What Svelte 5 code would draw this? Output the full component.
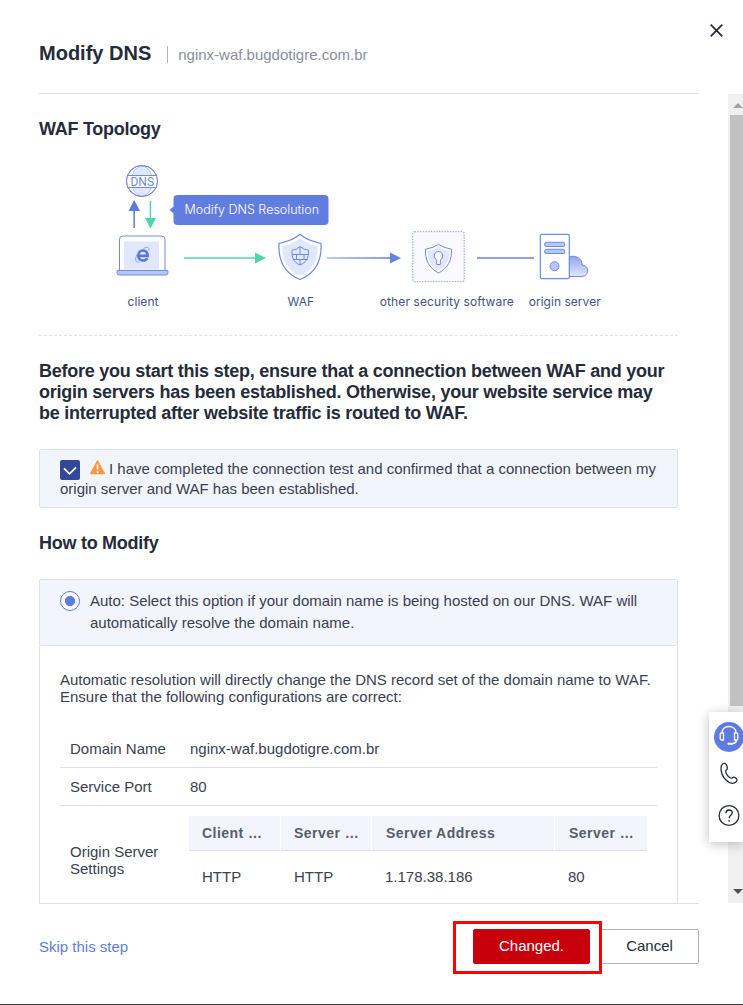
<script>
  const columns = ['Client …', 'Server …', 'Server Address', 'Server …'];
  const values = ['HTTP', 'HTTP', '1.178.38.186', '80'];
</script>

<div class="dialog">
  <header>
    <div class="heading">
      <h1>Modify DNS</h1>
      <span class="host">nginx-waf.bugdotigre.com.br</span>
    </div>
    <svg class="close" width="14" height="14" viewBox="0 0 14 14"><path d="M.7.7 12.300 12.300M12.300.7.7 12.300" /></svg>
  </header>

  <div class="body">
    <main>
      <h2>WAF Topology</h2>
      <svg class="topology" width="639" height="195" viewBox="39 140 639 195" fill="none" stroke="#6f8ae4">
        <defs>
          <linearGradient id="cloud" x1="0" y1="0" x2="0" y2="1"><stop stop-color="#91a5eb" /><stop offset="1" stop-color="#e0e7ff" /></linearGradient>
          <linearGradient id="wire"><stop stop-color="#a5b8f5" /><stop offset="1" stop-color="#5c7bde" /></linearGradient>
          <clipPath id="globe"><circle cx="142" cy="181" r="15.5" /></clipPath>
        </defs>
        <circle cx="142" cy="181" r="15.5" fill="#fff" />
        <g clip-path="url(#globe)">
          <ellipse cx="142" cy="181" rx="10.5" ry="15" fill="#e0e7ff" stroke="#b5c5f6" />
          <path d="M126 175.5H158V187.5H126Z" fill="#fff" />
        </g>
        <circle cx="142" cy="181" r="15.5" />
        <text x="130.5" y="186" textLength="23.5" lengthAdjust="spacingAndGlyphs" class="dns">DNS</text>
        <g stroke="none">
          <path d="M133.4 208h1.5v20h-1.5z" fill="#5c7bde" /><path d="M134.2 200 140 211H128.5Z" fill="#5c7bde" />
          <path d="M149.7 201h1.5v18h-1.5z" fill="#50d4ab" /><path d="M150.5 228.5 156 218H145Z" fill="#50d4ab" />
          <path d="M184 257.3h72v1.5h-72z" fill="#50d4ab" /><path d="M266 258 255 252.5V263.5Z" fill="#50d4ab" />
          <path d="M327 257.3h64v1.5h-64z" fill="url(#wire)" /><path d="M401 258 390 252.5V263.5Z" fill="#6683e0" />
          <path d="M477 257.3h57v1.5h-57z" fill="#6683e0" />
          <path d="M177.500 195H324.500Q328.500 195 328.500 199V221Q328.500 225 324.500 225H177.500Q173.500 225 173.500 221V213.500L169.500 210 173.500 206.500V199Q173.500 195 177.500 195Z" fill="#627de0" />
        </g>
        <text x="184.500" y="214" textLength="134.500" class="tip">Modify DNS Resolution</text>

        <path d="M119.500 270V239.500Q119.500 236 123 236H161.500Q165 236 165 239.500V270" fill="#fff" />
        <path d="M124 241.500H159V269.500H124Z" fill="#e0e7ff" stroke="none" />
        <path d="M117 270.500H168V273Q168 275 165.500 275H119.500Q117 275 117 273Z" fill="#b7c6f8" />
        <path d="M139 255.900H147.600C147.600 252.300 145.600 250.500 143 250.500C140.200 250.500 138.300 252.600 138.300 255.500C138.300 258.500 140.200 260.500 143 260.500C145 260.500 146.500 259.700 147.200 258.200" stroke="#5676dc" stroke-width="2.700" />
        <path d="M143.500 248.500Q149.500 245 149 250.500M139 251.500C135.500 255.500 133.500 263.500 139.500 262" stroke="#8da4eb" />

        <path d="M300 234.300Q307 240.500 321 243.500C322 261 316 273 300 279.500C284 273 278 261 279 243.500Q293 240.500 300 234.300Z" fill="#fff" stroke-width="1.200" />
        <path d="M300 238.500Q307 244 317.500 246.200C318 260 313 270 300 275.500C287 270 282 260 282.500 246.200Q293 244 300 238.500Z" fill="#e0e7ff" stroke="none" />
        <path d="M300 246.500Q304 250 308.500 250.200C309 258 306 262.500 300 265C294 262.500 291.500 258 292 250.200Q296.500 250 300 246.500ZM292 254.500H308.500M293 259.500H307.500M300 247V254.500M296.500 254.500V259.500M304 254.500V259.500M300 259.500V265" />

        <rect x="412.700" y="231.700" width="51.500" height="50" rx="2" fill="#f9faff" stroke="#a4b6ef" stroke-width="1.300" stroke-dasharray="1.500 1.200" />
        <path d="M438.500 244.300Q443 247.800 451.500 249.200C452 260 448 268 438.500 273C429 268 425 260 425.500 249.200Q434 247.800 438.500 244.300Z" fill="#fff" />
        <path d="M438.500 247Q443 250 449.300 251.200C449.500 260 446 266 438.500 270.300C431 266 427.500 260 427.700 251.200Q434 250 438.500 247Z" fill="#e0e7ff" stroke="none" />
        <path d="M436.700 259.800A4.300 4.300 0 1 1 440.300 259.800V264.500H436.700Z" fill="#fff" />

        <path d="M569 256.500Q581 254.500 582.500 265C590 266 589 276 582 276.500H569Z" fill="url(#cloud)" />
        <rect x="540.300" y="234.300" width="29" height="44.400" rx="1.500" fill="#fff" stroke-width="1.200" />
        <rect x="544.700" y="242.300" width="20" height="4.200" rx="1.500" fill="#b7c6f8" />
        <rect x="544.700" y="249.300" width="20" height="4.200" rx="1.500" fill="#b7c6f8" />
        <circle cx="554.500" cy="266.200" r="4.500" fill="#b7c6f8" />
        <text x="127.500" y="306" textLength="31">client</text>
        <text x="287.500" y="306" textLength="26.500">WAF</text>
        <text x="379.800" y="306" textLength="134">other security software</text>
        <text x="528.700" y="306" textLength="72">origin server</text>
      </svg>
      <div class="divider"></div>

      <p class="notice">Before you start this step, ensure that a connection between WAF and your<br />origin servers has been established. Otherwise, your website service may<br />be interrupted after website traffic is routed to WAF.</p>

      <div class="confirm">
        <svg class="check" width="20" height="20" viewBox="0 0 20 20"><rect width="20" height="20" rx="2" fill="#344899" /><path d="M4 8.300 9.500 13.800 16 7.300" fill="none" stroke="#fff" stroke-width="1.800" /></svg><svg class="warn" width="15" height="15" viewBox="0 0 15 15"><path d="M7.500 1 14.300 13.500H.7Z" fill="#fa9841" stroke="#fa9841" stroke-width="1.400" stroke-linejoin="round" /><path d="M7.500 4.500V9.800M7.500 11.300V13" stroke="#fff" stroke-width="1.600" /></svg><span>I have completed the connection test and confirmed that a connection between my<br />origin server and WAF has been established.</span>
      </div>

      <h2 class="how">How to Modify</h2>
      <div class="option">
        <span class="radio"></span>
        <p>Auto: Select this option if your domain name is being hosted on our DNS. WAF will<br />automatically resolve the domain name.</p>
      </div>
      <div class="panel">
        <p>Automatic resolution will directly change the DNS record set of the domain name to WAF.<br />Ensure that the following configurations are correct:</p>
        <div class="details">
          <div class="row"><span>Domain Name</span><span class="datum">nginx-waf.bugdotigre.com.br</span></div>
          <div class="row"><span>Service Port</span><span class="datum">80</span></div>
          <div class="row settings">
            <span>Origin Server<br />Settings</span>
            <div class="servers">
              {#each columns as column}<b>{column}</b>{/each}
              {#each values as value}<span class="value">{value}</span>{/each}
            </div>
          </div>
        </div>
      </div>
    </main>
    <div class="scrollbar">
      <i class="up"></i>
      <div class="thumb"></div>
      <i class="down"></i>
    </div>
  </div>

  <footer>
    <a href="#skip">Skip this step</a>
    <div class="actions">
      <button class="primary">Changed.</button>
      <button>Cancel</button>
    </div>
  </footer>
  <div class="highlight"></div>

  <aside>
    <svg width="34" height="130" viewBox="0 0 34 130" fill="none" stroke="#252b3a" stroke-width="1.300">
      <circle cx="20" cy="25" r="15" fill="#5e7ce0" stroke="none" />
      <path d="M13.200 21V20A6.800 5.500 0 0 1 26.800 20V21M11.200 22Q11.200 21 12.300 21H14.500V28H12.500Q11.200 28 11.200 26.500ZM28.800 22Q28.800 21 27.700 21H25.500V28H27.500Q28.800 28 28.800 26.500ZM27.700 28Q27 31.300 23.500 31.500" stroke="#fff" />
      <path d="M19.300 31.700H23.300" stroke="#fff" stroke-width="2" stroke-linecap="round" />
      <path d="M14.500 51.500C17 50.500 18.200 53.800 18.300 56C18.400 58 16.300 58 16.800 59.800C17.500 62.500 19.500 65 21.700 66C23.300 66.700 23.700 64.700 25.500 65.300C28 66.200 28.700 68 27.200 69.700C24.500 72.500 20.500 71.500 17 68C13.500 64.500 11.800 59.500 12 55.700C12.200 53.300 12.800 52.200 14.500 51.500Z" />
      <circle cx="20" cy="103.500" r="9.900" />
      <path d="M17 101.300C17 97 23.200 97 23.200 100.700C23.200 103.200 20.100 103.200 20.100 106.300M20.100 108V109.700" />
    </svg>
  </aside>
</div>

<style>
  :global(body) { margin: 0; background: #fff; }
  * { box-sizing: border-box; }
  .dialog { position: relative; width: 743px; height: 1005px; overflow: hidden; display: flex; flex-direction: column; border-bottom: 1px solid #3c3c3c; font: 15px/17px "Liberation Sans", Arial, sans-serif; color: #3a4050; background: #fff; }
  h1, h2, p { margin: 0; color: #252b3a; }
  header { height: 94px; flex: none; display: flex; padding-left: 39px; }
  .heading { width: 660px; display: flex; align-items: flex-start; border-bottom: 1px solid #dfe1e6; }
  h1 { font-size: 20px; line-height: 24px; margin: 41px 16px 0 0; }
  .host { margin-top: 46px; padding-left: 10px; border-left: 1px solid #adb0b8; color: #8a8e99; }
  .close { margin: 24px 0 0 11px; fill: none; stroke: #252b3a; stroke-width: 1.7; }
  .body { height: 809px; flex: none; display: flex; justify-content: space-between; overflow: hidden; }
  main { width: 639px; margin-left: 39px; padding-top: 25px; flex: none; }
  h2 { font-size: 18px; line-height: 21px; height: 21px; letter-spacing: -.27px; }
  .topology { display: block; }
  .topology text { font: 12px "Inter", sans-serif; fill: #46527e; stroke: none; }
  .topology .tip { fill: #fff; font-size: 12.5px; font-weight: 300; }
  .topology .dns { fill: #6f8ae4; font: 13px "Roboto", sans-serif; }
  .divider { border-top: 1px dashed #dfe1e6; }
  .notice { margin-top: 25px; font-size: 18px; font-weight: 700; line-height: 21px; letter-spacing: -.245px; white-space: nowrap; }
  .confirm { height: 59px; margin-top: 25px; padding: 9px 20px; border: 1px solid #dfe1e9; border-radius: 2px; background: #f2f5fc; line-height: 20px; white-space: nowrap; }
  .check { vertical-align: top; margin: 1px 10px -1px 0; }
  .warn { vertical-align: top; margin: 1px 4px 0 0; }
  .how { margin-top: 25px; }
  .option { display: flex; height: 67px; margin-top: 25px; padding: 10px 20px; border: 1px solid #dfe1e9; border-radius: 2px; background: #f2f5fc; line-height: 22px; white-space: nowrap; }
  p { color: #3a4050; }
  p.notice { color: #252b3a; }
  .radio { width: 20px; height: 20px; margin: 1px 10px 0 0; border: 1px solid #5e7ce0; border-radius: 50%; background: radial-gradient(circle, #5e7ce0 4.8px, #fff 5.3px); }
  .panel { padding: 25px 20px 20px; border: 1px solid #dfe1e6; border-top: 0; white-space: nowrap; }
  .details { margin-top: 25px; }
  .row { display: grid; grid-template-columns: 119px 1fr; height: 38px; padding: 0 10px; align-items: center; border-bottom: 1px solid #dfe1e6; }
  .datum { padding-left: 1px; }
  .settings { height: 108px; }
  .servers { display: grid; grid-template-columns: 92px 91px 183px 92px; grid-template-rows: 35px 53px; }
  .servers b { padding: 9px 0 0 13px; border-right: 1px solid #fff; background: #f2f5fc; box-shadow: inset 0 -1px #dfe1e6; color: #575d6c; font-size: 14px; letter-spacing: .45px; }
  .servers b:nth-child(n+3) { padding-left: 14px; }
  .servers b:nth-child(4) { border: 0; }
  .value { padding: 17px 0 0 13px; }
  .scrollbar { width: 15px; background: #f0f0f0; display: flex; flex-direction: column; align-items: flex-start; }
  .scrollbar i { border: 5px solid transparent; margin-left: 5px; }
  .up { height: 5px; margin-top: 9px; border-top: 0 !important; border-bottom-color: #a3a3a3 !important; }
  .down { height: 5px; margin-top: 183px; border-bottom: 0 !important; border-top-color: #505050 !important; }
  .thumb { width: 13px; height: 591px; margin: 7px 0 0 2px; background: #c1c1c1; flex: none; }
  footer { width: 660px; height: 101px; flex: none; margin-left: 39px; display: flex; justify-content: space-between; border-top: 1px solid #dfe1e6; }
  footer a { margin-top: 34px; height: 17px; color: #5e7ce0; text-decoration: none; }
  .actions { display: flex; gap: 10px; padding-top: 25px; }
  button { width: 99px; height: 35px; padding: 0 0 2px; border: 1px solid #adb0b8; border-radius: 2px; background: #fff; font: inherit; color: #252b3a; }
  .primary { width: 117px; border-color: #c7000b; background: #c7000b; color: #fff; }
  .highlight { position: absolute; left: 453px; top: 921px; width: 149px; height: 53px; border: 3px solid #f00; }
  aside { position: absolute; left: 709px; top: 712px; width: 34px; height: 130px; background: #fff; box-shadow: 0 2px 12px rgba(0, 0, 0, .25); }
  aside svg { display: block; }
</style>
